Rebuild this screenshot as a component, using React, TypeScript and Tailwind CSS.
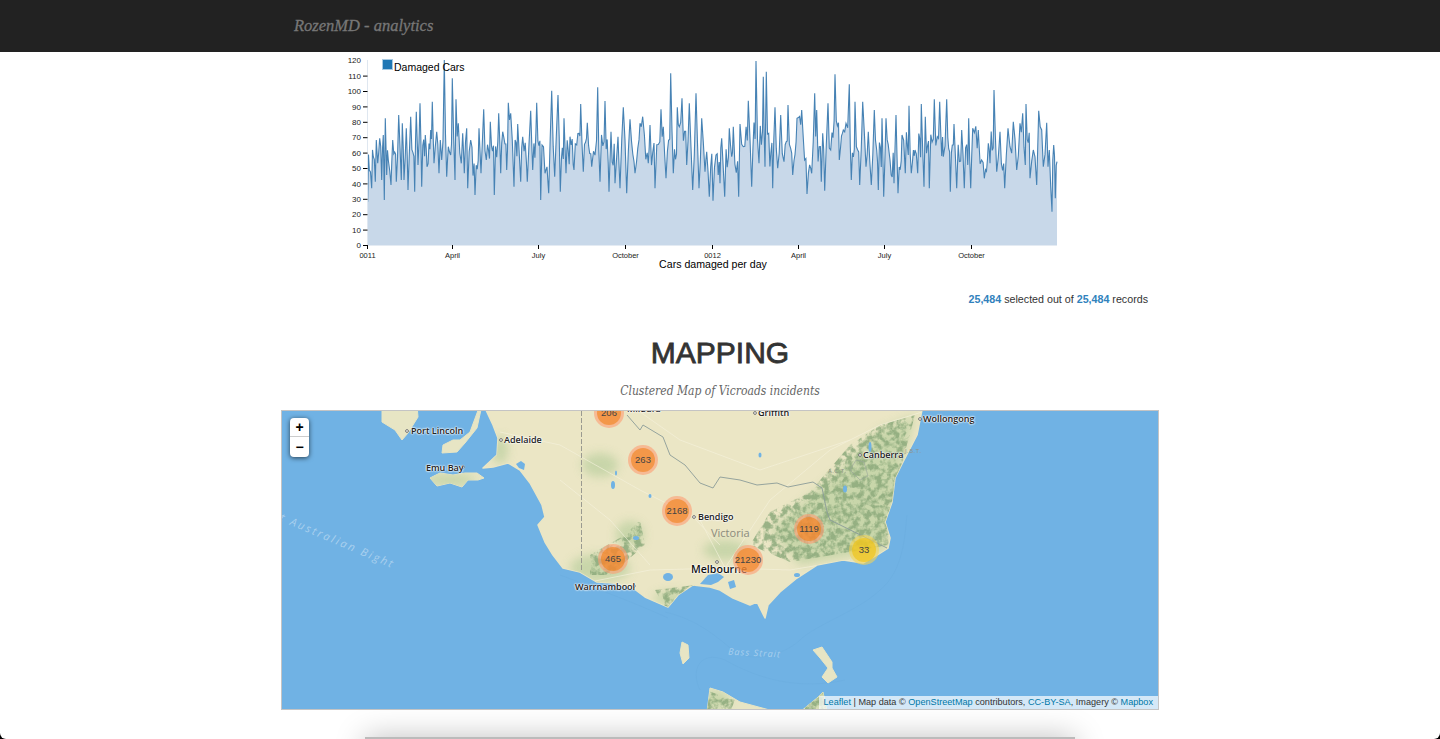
const left = [[263,605],[268,510],[275,565],[280,470],[286,545],[289,420],[293,490],[299,415],[305,540],[310,405],[313,600],[316,355],[320,525],[325,480],[333,555],[338,420],[349,545],[356,345],[364,540],[367,370],[372,540],[379,385],[384,570],[392,350],[404,575],[409,335],[414,495],[420,310],[425,560],[436,405],[441,500],[452,390],[457,305],[462,490],[470,395],[477,520],[481,420],[485,480],[493,180],[500,530],[505,440],[512,465],[517,235],[525,540],[528,298],[535,370],[544,490],[548,400],[553,520],[560,385],[563,565],[572,420],[585,585],[597,385],[603,520],[611,328],[619,480],[631,365],[643,585],[656,340],[662,520],[668,395],[680,510],[685,308],[692,340],[702,560],[713,372],[722,545],[728,410],[742,545],[752,332],[758,510],[770,308],[782,600],[786,435],[795,520],[806,580],[815,272],[824,530],[834,285],[841,575],[852,355],[858,520],[870,410],[882,510],[890,435],[902,312],[910,515],[922,368],[935,500],[953,262],[960,545],[975,303],[987,575],[993,395],[1005,550],[1014,410],[1020,565],[1030,322],[1040,580],[1050,358],[1065,520],[1080,370],[1088,350],[1105,490],[1110,375],[1125,565],[1143,328],[1150,380],[1158,535],[1172,220],[1180,520],[1192,322],[1198,380]];
const right = [[6,145],[20,345],[28,160],[38,420],[48,130],[57,415],[65,205],[75,365],[80,305],[88,440],[92,350],[99,452],[108,315],[120,400],[125,265],[134,440],[148,235],[155,320],[160,230],[176,440],[180,222],[190,290],[205,152],[215,410],[228,33],[237,340],[250,80],[255,350],[259,65],[266,250],[278,415],[285,172],[293,355],[302,195],[312,335],[324,165],[338,375],[351,205],[365,180],[381,432],[395,370],[404,130],[410,180],[424,395],[428,250],[434,422],[444,160],[452,300],[465,73],[478,330],[490,240],[498,220],[508,103],[514,390],[525,155],[539,405],[548,155],[558,350],[565,245],[574,405],[583,180],[590,300],[595,420],[606,205],[611,440],[618,205],[630,330],[642,400],[648,195],[654,430],[666,255],[676,370],[687,167],[694,370],[705,300],[713,370],[724,162],[732,410],[736,200],[748,415],[763,148],[772,260],[779,155],[790,320],[800,148],[811,425],[822,222],[830,415],[845,240],[853,415],[866,205],[872,415],[878,235],[895,240],[913,385],[925,280],[930,340],[942,120],[950,365],[960,245],[974,415],[984,235],[990,290],[1000,215],[1010,360],[1020,220],[1028,190],[1036,345],[1038,162],[1050,385],[1060,300],[1070,405],[1076,182],[1085,240],[1090,350],[1100,218],[1104,350],[1108,300],[1112,410],[1116,485],[1121,285],[1126,445],[1131,335]];

const traced = [
  ...left.map(([x, y]) => [280 + x / 3, y / 3]),
  ...right.map(([x, y]) => [680 + x / 3, 50 + y / 3]),
];

function noise(i: number) {
  const w = Math.sin(i * 12.9898) * 43758.5453;
  return w - Math.floor(w) - 0.5;
}

// the trace only has the big spikes, fill the gaps with daily wobble around the mean
const dense: number[][] = [];
traced.forEach((p, i) => {
  dense.push(p);
  const next = traced[i + 1];
  if (!next) return;
  const gap = next[0] - p[0];
  if (gap < 1.6) return;
  const mid = (p[1] + next[1]) / 2;
  if (gap >= 3.5) {
    dense.push([p[0] + gap * 0.3, mid * 0.5 + 75 + noise(i) * 30]);
    dense.push([p[0] + gap * 0.55, mid * 0.5 + 75 + noise(i + 500) * 34]);
    dense.push([p[0] + gap * 0.8, mid * 0.5 + 75 + noise(i + 900) * 30]);
  } else {
    dense.push([p[0] + gap * 0.5, mid * 0.45 + 82 + noise(i) * 22]);
  }
});

const line = dense.map(([x, y]) => `${x.toFixed(1)},${y.toFixed(1)}`).join(' ');
const area = `367.7,245 ${line} 1057,245`;

const yTicks = [0, 10, 20, 30, 40, 50, 60, 70, 80, 90, 100, 110, 120];
const xTicks = [
  { x: 367.5, label: '0011' },
  { x: 452.5, label: 'April' },
  { x: 538.5, label: 'July' },
  { x: 625.5, label: 'October' },
  { x: 712.5, label: '0012' },
  { x: 798.5, label: 'April' },
  { x: 884.5, label: 'July' },
  { x: 971.5, label: 'October' },
];

function Chart() {
  return (
    <svg width="878" height="225" viewBox="281 52 878 225" className="block font-['Liberation_Sans',sans-serif]">
      <polygon points={area} fill="#c8d8e9" />
      <polyline points={line} fill="none" stroke="#4682b4" strokeWidth="1.1" />
      <line x1="367.5" y1="60" x2="367.5" y2="245" stroke="#dfe7f0" />
      <line x1="363" y1="245.5" x2="1057" y2="245.5" stroke="#e4ebf3" />
      {yTicks.map((t) => {
        const y = 245.5 - t * 1.54;
        return (
          <g key={t}>
            {t < 120 && <line x1="363" x2="367.5" y1={y} y2={y} stroke="#000" />}
            <text x="361" y={y + 2.6} textAnchor="end" fontSize="8" fill="#222">{t}</text>
          </g>
        );
      })}
      {xTicks.map((t) => (
        <g key={t.x}>
          <line x1={t.x} x2={t.x} y1="245" y2="249" stroke="#000" />
          <text x={t.x} y="258" textAnchor="middle" fontSize="7.5" fill="#222">{t.label}</text>
        </g>
      ))}
      <rect x="382.5" y="59.5" width="10" height="10" fill="#1f77b4" stroke="#a9cbe3" />
      <text x="394" y="71" fontSize="10.5" fill="#000">Damaged Cars</text>
      <text x="713" y="268" textAnchor="middle" fontSize="10.6" fill="#000">Cars damaged per day</text>
    </svg>
  );
}

const mainland = '486,405 486,410 493,425 498,438 497,455 483,468 493,467 508,463 520,470 530,483 542,505 545,517 538,525 545,542 553,555 563,568 580,572 597,582 613,583 633,588 645,597 668,607 678,595 693,585 710,587 720,590 733,598 750,605 757,602 765,618 768,605 780,592 797,578 817,565 843,560 863,563 877,555 888,548 890,538 885,522 892,502 895,478 903,462 917,435 922,410 922,405';
const islands = [
  '382,405 382,422 395,430 402,440 408,433 413,425 418,417 417,405',
  '480,405 470,432 460,440 453,440 443,445 442,453 457,452 465,443 477,428 482,405',
  '430,478 440,473 453,475 465,473 477,473 484,478 478,480 468,480 462,487 450,483 437,486',
  '682,642 688,645 689,658 683,664 680,653',
  '813,650 822,647 832,662 832,668 837,677 828,683 822,677 828,668 820,658',
  '707,712 710,688 723,692 740,702 777,712',
  '800,712 817,698 823,692 827,712',
];

function MapArt() {
  return (
    <svg width="876" height="298" viewBox="282 411 876 298" className="block">
      <defs>
        <filter id="hills" x="-5%" y="-5%" width="110%" height="110%">
          <feTurbulence type="fractalNoise" baseFrequency="0.17" numOctaves="3" seed="7" result="n" />
          <feColorMatrix in="n" type="matrix" values="0 0 0 0 0  0 0 0 0 0  0 0 0 0 0  0 0 0 3.5 -1.3" result="m" />
          <feComposite in="SourceGraphic" in2="m" operator="in" />
          <feGaussianBlur stdDeviation="0.6" />
        </filter>
        <filter id="soft"><feGaussianBlur stdDeviation="5" /></filter>
        <clipPath id="land">
          <polygon points={mainland} />
          {islands.map((p) => <polygon key={p} points={p} />)}
        </clipPath>
      </defs>
      <rect x="282" y="411" width="876" height="298" fill="#70b2e4" />
      <g fill="none" stroke="#66a8da" strokeWidth="0.7" opacity="0.4">
        <path d="M665 612 C700 620 720 640 735 652 C760 665 790 650 800 640 C815 625 860 610 880 590 C905 570 905 530 907 515" />
        <path d="M560 575 C600 590 640 605 668 618 M700 690 C690 670 700 650 725 660 C760 680 800 690 845 680" />
      </g>
      <polygon points={mainland} fill="#ebe6c5" stroke="#ebe6c5" strokeWidth="1.5" strokeLinejoin="round" />
      {islands.map((p) => <polygon key={p} points={p} fill="#e7e5c4" stroke="#e7e5c4" strokeWidth="1" strokeLinejoin="round" />)}
      <g clipPath="url(#land)">
        <g fill="#c2d3a5" opacity="0.85" filter="url(#soft)">
          <path d="M770 530 L840 470 L880 430 L915 415 L900 470 L885 550 L800 565 Z" />
          <ellipse cx="600" cy="568" rx="30" ry="14" />
          <ellipse cx="630" cy="535" rx="14" ry="14" />
          <ellipse cx="672" cy="598" rx="18" ry="7" />
          <ellipse cx="600" cy="465" rx="18" ry="12" />
          <ellipse cx="725" cy="550" rx="22" ry="10" />
          <ellipse cx="450" cy="480" rx="25" ry="6" />
          <ellipse cx="500" cy="450" rx="8" ry="14" />
          <ellipse cx="715" cy="700" rx="14" ry="9" />
          <ellipse cx="820" cy="700" rx="12" ry="9" />
        </g>
        <g fill="#8caa7c" opacity="0.85" filter="url(#hills)">
          <path d="M750 545 L770 512 L810 492 L850 445 L880 425 L915 415 L900 470 L888 545 L850 552 L790 562 Z" />
          <path d="M590 555 L625 535 L640 520 L645 545 L610 575 L590 575 Z" />
          <path d="M655 590 L695 585 L680 605 L665 607 Z" />
          <path d="M705 690 L735 700 L730 712 L705 712 Z M805 705 L825 690 L830 712 L805 712 Z" />
        </g>
        <g fill="none" stroke="#f5f2dd" strokeWidth="0.9" opacity="0.7">
          <path d="M500 432 L560 445 L640 490 L700 520 L725 568" />
          <path d="M725 568 L770 500 L830 450 L880 425 L922 412" />
          <path d="M640 412 L680 440 L760 470 L850 440" />
          <path d="M725 568 L650 570 L590 582 M725 568 L790 570 L850 560" />
          <path d="M693 517 L720 545 M560 480 L610 520 L650 565" />
        </g>
      </g>
      <g fill="#70b2e4">
        <polygon points="708,575 718,573 724,577 718,582 711,585 700,584" />
        <polygon points="728,582 734,580 736,587 730,589" />
        <polygon points="516,464 521,461 525,464 524,470 519,468" />
        <ellipse cx="613" cy="485" rx="2" ry="4" />
        <ellipse cx="616" cy="473" rx="1" ry="2.5" />
        <ellipse cx="650" cy="496" rx="1.5" ry="2" />
        <ellipse cx="636" cy="538" rx="3" ry="2" />
        <ellipse cx="668" cy="577" rx="5" ry="4" />
        <ellipse cx="760" cy="455" rx="1.5" ry="2.5" />
        <ellipse cx="845" cy="489" rx="2" ry="3.5" />
        <ellipse cx="870" cy="447" rx="1.5" ry="5" />
        <ellipse cx="797" cy="575" rx="3" ry="2" />
      </g>
      <path d="M581.5 411 V572" stroke="#9a9a90" strokeWidth="1" strokeDasharray="5 2" fill="none" />
      <path d="M627 415 L640 430 L643 425 L663 437 L670 455 L685 465 L700 483 L713 488 L720 477 L740 480 L757 485 L777 483 L788 487 L813 482 L822 488 L827 512 L830 520 L887 548" stroke="#8b9c98" strokeWidth="0.9" fill="none" />
      <path d="M856 460 L850 470 L860 480 L868 476 L864 462 Z" stroke="#9aa59a" strokeWidth="0.6" fill="none" />
      <g fill="#fff" stroke="#555" strokeWidth="0.8">
        <circle cx="407" cy="431" r="1.4" />
        <circle cx="501" cy="440" r="1.4" />
        <circle cx="463" cy="467" r="1.4" />
        <circle cx="694" cy="517" r="1.4" />
        <circle cx="634" cy="586" r="1.4" />
        <circle cx="755" cy="413" r="1.4" />
        <circle cx="860" cy="455" r="1.4" />
        <circle cx="920" cy="419" r="1.4" />
        <circle cx="717" cy="562" r="1.4" />
      </g>
    </svg>
  );
}

const labels = [
  { name: 'Mildura', cls: 'left-[345px] top-[-8px]' },
  { name: 'Griffith', cls: 'left-[476px] top-[-4px]' },
  { name: 'Wollongong', cls: 'left-[641px] top-[2px]' },
  { name: 'Port Lincoln', cls: 'left-[129px] top-[14px]' },
  { name: 'Adelaide', cls: 'left-[222px] top-[23px]' },
  { name: 'Emu Bay', cls: 'left-[144px] top-[51px]' },
  { name: 'Bendigo', cls: 'left-[416px] top-[100px]' },
  { name: 'Canberra', cls: 'left-[581px] top-[38px]' },
  { name: 'Warrnambool', cls: 'left-[293px] top-[170px]' },
];

const clusters = [
  { n: '206', cls: 'left-[312px] top-[-13px]', big: true },
  { n: '263', cls: 'left-[346px] top-[34px]', big: true },
  { n: '2168', cls: 'left-[380px] top-[85px]', big: true },
  { n: '465', cls: 'left-[316px] top-[133px]', big: true },
  { n: '1119', cls: 'left-[512px] top-[103px]', big: true },
  { n: '21230', cls: 'left-[451px] top-[134px]', big: true },
  { n: '33', cls: 'left-[567px] top-[124px]', big: false },
];

function Cluster({ n, cls, big }: { n: string; cls: string; big: boolean }) {
  return (
    <div className={`absolute ${cls} w-[30px] h-[30px] rounded-full flex items-center justify-center ${big ? 'bg-[#fd9c73]/60' : 'bg-[#f1d357]/60'}`}>
      <div className={`w-[24px] h-[24px] rounded-full flex items-center justify-center text-[9.5px] text-[#444] ${big ? 'bg-[#f18017]/60' : 'bg-[#f0c20c]/60'}`}>
        {n}
      </div>
    </div>
  );
}

function LeafletMap() {
  return (
    <div className="relative w-[878px] h-[300px] shrink-0 border border-[#c4c4c4] overflow-hidden font-['Liberation_Sans',sans-serif]">
      <MapArt />
      {labels.map((l) => (
        <span
          key={l.name}
          className={`absolute ${l.cls} text-[9px] leading-[12px] font-semibold whitespace-nowrap text-[#222] font-['Open_Sans',sans-serif] [text-shadow:0_0_2px_#fff,0_0_2px_#fff,0_0_2px_#fff]`}
        >
          {l.name}
        </span>
      ))}
      <span className="absolute left-[429px] top-[115px] text-[11px] leading-[14px] text-[#8a8a7c] font-['Open_Sans',sans-serif]">Victoria</span>
      <span className="absolute left-[409px] top-[151px] text-[10.6px] leading-[14px] font-semibold text-[#111] font-['Open_Sans',sans-serif] [text-shadow:0_0_2px_#fff,0_0_2px_#fff,0_0_2px_#fff]">Melbourne</span>
      <span className="absolute left-[-31px] top-[87px] rotate-[23deg] origin-left text-[11px] leading-[12px] italic tracking-[2.2px] text-[#a9d0ee] whitespace-nowrap font-['Open_Sans',sans-serif]">Great Australian Bight</span>
      <span className="absolute left-[446px] top-[236px] rotate-[3deg] text-[9px] leading-[12px] italic tracking-[1px] text-[#a9d0ee] whitespace-nowrap font-['Open_Sans',sans-serif]">Bass Strait</span>
      <span className="absolute left-[546px] top-[56px] text-[6px] leading-[8px] tracking-[0.5px] text-[#8d9384] font-['Open_Sans',sans-serif]">A.C.T.</span>
      <span className="absolute left-[623px] top-[36px] text-[6px] leading-[8px] tracking-[0.5px] text-[#8d9384] font-['Open_Sans',sans-serif]">J.B.T.</span>
      {clusters.map((c) => <Cluster key={c.n} {...c} />)}
      <div className="absolute left-[8px] top-[7px] w-[19px] rounded-[4px] bg-white shadow-[0_1px_5px_rgba(0,0,0,0.65)] flex flex-col text-black font-bold">
        <div className="h-[19px] flex items-center justify-center text-[14px] leading-none border-b border-[#ccc]">+</div>
        <div className="h-[20px] flex items-center justify-center text-[14px] leading-none">−</div>
      </div>
      <div className="absolute right-0 bottom-0 h-[13px] px-[5px] bg-white/70 text-[9.15px] leading-[13px] text-[#333] whitespace-nowrap">
        <span className="text-[#0078a8]">Leaflet</span> | Map data © <span className="text-[#0078a8]">OpenStreetMap</span> contributors, <span className="text-[#0078a8]">CC-BY-SA</span>, Imagery © <span className="text-[#0078a8]">Mapbox</span>
      </div>
    </div>
  );
}

export default function App() {
  return (
    <div className="relative h-screen overflow-hidden bg-white flex flex-col">
      <header className="h-[52px] shrink-0 bg-[#222] flex items-center justify-center">
        <div className="w-[878px] pl-[13px] text-[16.5px] italic text-[#777] [-webkit-text-stroke:0.3px_#777] font-['Liberation_Serif',serif]">RozenMD - analytics</div>
      </header>
      <main className="w-[878px] mx-auto flex flex-col items-center">
        <Chart />
        <div className="w-full flex justify-end pt-[16px] pr-[11px] text-[10.7px] leading-[12px] text-[#333] font-['Liberation_Sans',sans-serif]">
          <span><b className="text-[#3182bd]">25,484</b> selected out of <b className="text-[#3182bd]">25,484</b> records</span>
        </div>
        <h1 className="pt-[30px] text-[30px] leading-[36px] text-[#333] [-webkit-text-stroke:0.8px_#333] font-['Liberation_Sans',sans-serif]">MAPPING</h1>
        <p className="pt-[11px] h-[39px] text-[12px] leading-[18px] italic text-[#666] font-['DejaVu_Serif_Condensed','DejaVu_Serif',serif]">Clustered Map of Vicroads incidents</p>
        <LeafletMap />
        <div className="mt-[27px] w-[710px] h-[40px] shrink-0 bg-white border-t-2 border-[#bbb] shadow-[0_0_30px_rgba(0,0,0,0.25)]" />
      </main>
      <div className="pointer-events-none absolute inset-0 rounded-b-[6px] shadow-[0_0_0_10px_#000]" />
    </div>
  );
}
